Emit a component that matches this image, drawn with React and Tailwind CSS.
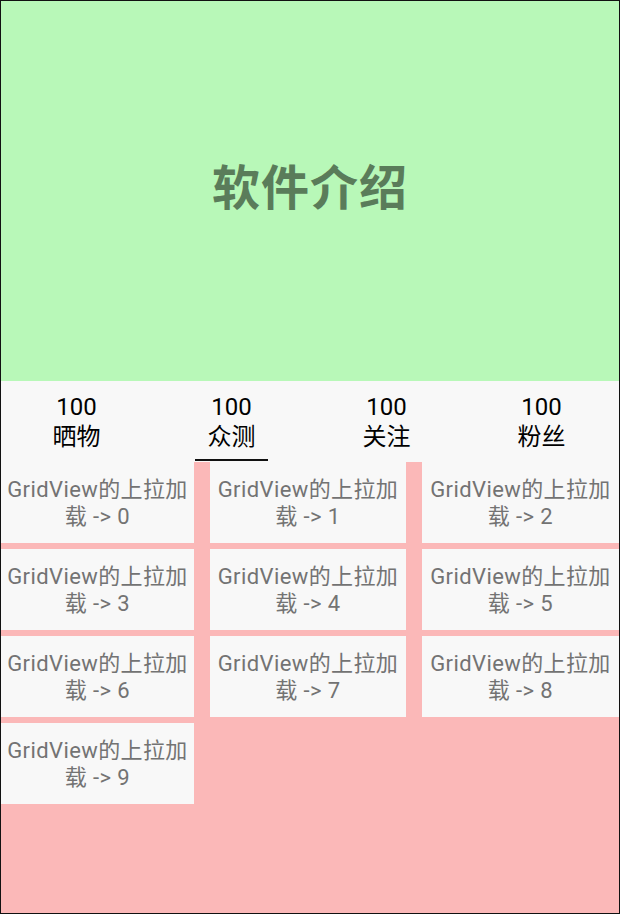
import React from "react";

const tabs = [
  { count: 100, label: "晒物" },
  { count: 100, label: "众测", active: true },
  { count: 100, label: "关注" },
  { count: 100, label: "粉丝" },
];

const items = Array.from({ length: 10 }, (_, i) => i);

const App = () => {
  return (
    <div
      className="w-[620px] h-[914px] border border-[#111] bg-[#fbb8b8] flex flex-col overflow-hidden"
      style={{ fontFamily: 'Roboto, "Noto Sans CJK SC", sans-serif' }}
    >
      {/* Header */}
      <div className="h-[380px] bg-[#b8f8b8] flex items-center justify-center shrink-0">
        <h1 className="text-[48px] font-bold text-[#5a7c5a] tracking-[1px] mt-[-5px]">
          软件介绍
        </h1>
      </div>

      {/* Tabs */}
      <div className="h-[81px] bg-[#f8f8f8] shrink-0">
        <div className="h-full grid grid-cols-[repeat(4,155px)] -ml-[2px]">
          {tabs.map((tab, index) => (
            <div key={index} className="flex flex-col items-center">
              <div className="flex-1 flex flex-col items-center justify-center text-[24px] leading-[30px] text-black pt-[3px]">
                <span>{tab.count}</span>
                <span>{tab.label}</span>
              </div>
              <div
                className={`h-[2px] w-[73px] mb-[1px] ${
                  tab.active ? "bg-[#111]" : "bg-transparent"
                }`}
              ></div>
            </div>
          ))}
        </div>
      </div>

      {/* Grid */}
      <div className="grid grid-cols-[193px_196px_197px] gap-x-[16px] gap-y-[6px]">
        {items.map((i) => (
          <div
            key={i}
            className="h-[81px] bg-[#f8f8f8] flex flex-col items-center justify-center text-center text-[22px] leading-[27px] tracking-[0.4px] text-[#737373] whitespace-nowrap"
          >
            <span>GridView的上拉加</span>
            <span>载 -&gt; {i}</span>
          </div>
        ))}
      </div>
    </div>
  );
};

export default App;
